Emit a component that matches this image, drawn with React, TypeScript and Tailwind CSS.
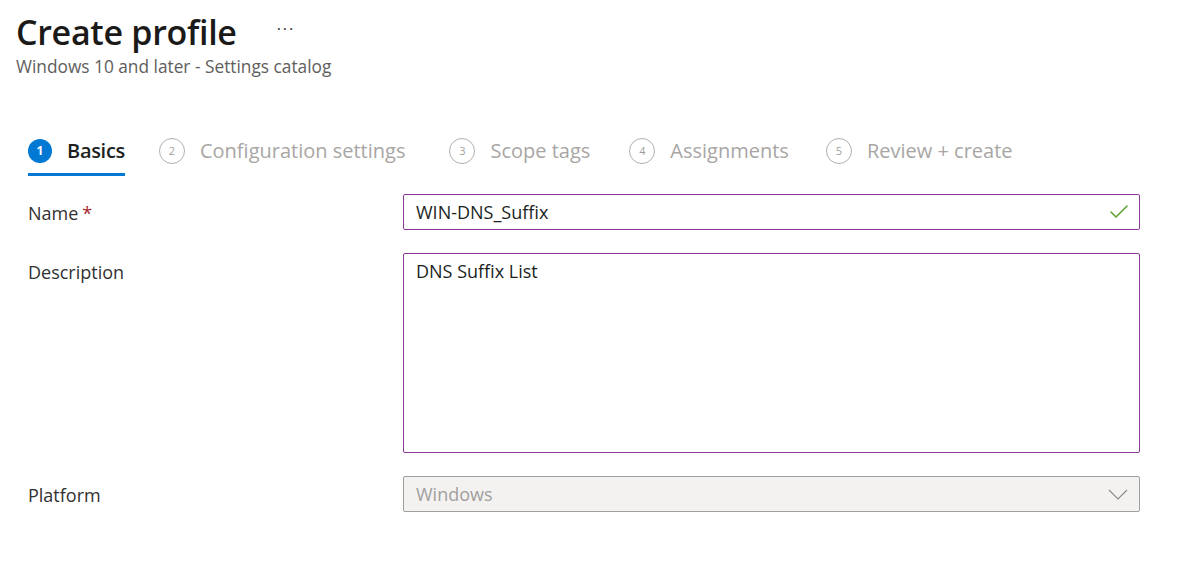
import { Check } from "lucide-react";

const steps = [
	{ n: 1, label: "Basics", active: true, gap: "mr-[34px]" },
	{ n: 2, label: "Configuration settings", gap: "mr-[44px]" },
	{ n: 3, label: "Scope tags", gap: "mr-[39px]" },
	{ n: 4, label: "Assignments", gap: "mr-[37px]" },
	{ n: 5, label: "Review + create", gap: "" },
];

const Step = ({ n, label, active, gap }: { n: number; label: string; active?: boolean; gap: string }) => (
	<div className={`relative flex items-center h-[46px] ${gap}`}>
		{active ? (
			<span className="flex items-center justify-center w-6 h-6 rounded-full bg-[#0078d4] text-white text-[12px] font-bold">
				{n}
			</span>
		) : (
			<span className="flex items-center justify-center w-[26px] h-[26px] rounded-full border border-[#b3b0ad] text-[#a19f9d] text-[11px]">
				{n}
			</span>
		)}
		<span className={`ml-[15px] text-[20px] ${active ? "text-[#201f1e] font-semibold tracking-[-0.3px]" : "text-[#a8a6a4]"}`}>
			{label}
		</span>
		{active && <div className="absolute left-0 right-0 bottom-[-2px] h-[3px] bg-[#0078d4]" />}
	</div>
);

const Row = ({ label, required, children }: { label: string; required?: boolean; children: React.ReactNode }) => (
	<div className="flex items-start">
		<div className="w-[375px] pt-[6px] text-[18px] text-[#323130]">
			{label}
			{required && <span className="ml-1 text-[#a4262c]">*</span>}
		</div>
		{children}
	</div>
);

export default function App() {
	return (
		<div className="w-[1186px] h-[580px] bg-white font-['Open_Sans',sans-serif] overflow-hidden">
			<div className="pl-4 pt-[8px]">
				<div className="flex items-center">
					<h1 className="text-[34px] font-semibold text-[#1b1a19] leading-[48px] tracking-[-0.3px]">Create profile</h1>
					<span className="ml-[40px] text-[#323130] text-[16px] tracking-[2px] -mt-[6px]">···</span>
				</div>
				<p className="text-[17.3px] text-[#605e5c] leading-[22px]">Windows 10 and later - Settings catalog</p>
			</div>

			<div className="pl-7 mt-[50px] flex items-center">
				{steps.map((s) => (
					<Step key={s.n} {...s} />
				))}
			</div>

			<div className="pl-7 pr-[46px] mt-[20px] flex flex-col gap-[23px]">
				<Row label="Name" required>
					<div className="flex-1 h-[36px] border border-[#8a3a96] rounded-[2px] flex items-center pl-3 pr-[8px]">
						<span className="flex-1 text-[18px] text-[#201f1e]">WIN-DNS_Suffix</span>
						<Check className="w-[24px] h-[24px] text-[#5aa02c]" strokeWidth={1.5} />
					</div>
				</Row>
				<Row label="Description">
					<div className="flex-1 h-[200px] border border-[#8a3a96] rounded-[2px] px-3 pt-[4px]">
						<span className="text-[18px] text-[#201f1e]">DNS Suffix List</span>
					</div>
				</Row>
				<Row label="Platform">
					<div className="flex-1 h-[36px] border border-[#a19f9d] bg-[#f3f2f1] rounded-[2px] flex items-center pl-3 pr-[11px]">
						<span className="flex-1 text-[18px] text-[#a19f9d]">Windows</span>
						<svg width="20" height="11" viewBox="0 0 20 11" fill="none" stroke="#8a8886" strokeWidth="1.1">
							<polyline points="1,1 10,10 19,1" />
						</svg>
					</div>
				</Row>
			</div>
		</div>
	);
}
